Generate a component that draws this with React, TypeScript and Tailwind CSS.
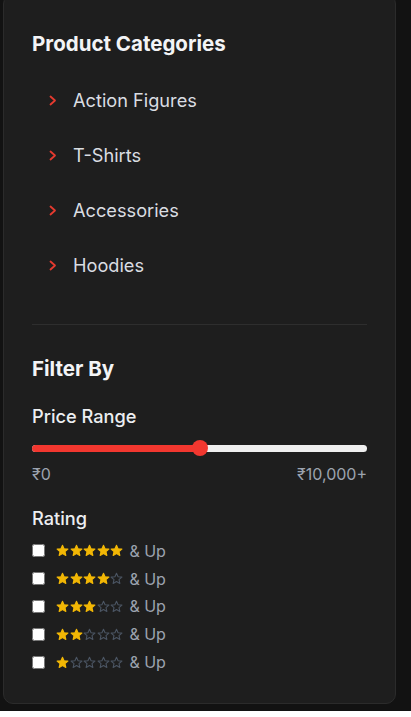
const categories = ['Action Figures', 'T-Shirts', 'Accessories', 'Hoodies'];
const ratings = [5, 4, 3, 2, 1];

function Chevron() {
  return (
    <svg width="8" height="11" viewBox="0 0 8 11" className="shrink-0">
      <polyline points="1.5,1.5 6,5.5 1.5,9.5" fill="none" stroke="#e53a2f" strokeWidth="1.8" strokeLinecap="round" strokeLinejoin="round" />
    </svg>
  );
}

function Star({ filled }: { filled: boolean }) {
  return (
    <svg width="13" height="13" viewBox="0 0 24 24" className="shrink-0">
      <path
        d="M12 2.2l2.9 6.6 7.1.6-5.4 4.7 1.6 7-6.2-3.7-6.2 3.7 1.6-7L2 9.4l7.1-.6z"
        fill={filled ? '#f2b705' : 'none'}
        stroke={filled ? '#f2b705' : '#4b5563'}
        strokeWidth="2"
        strokeLinejoin="round"
      />
    </svg>
  );
}

export default function App() {
  return (
    <div className="min-h-screen bg-[#121212] pl-[3px] pr-[15px] font-['Inter','Liberation_Sans',sans-serif]">
      <div className="-mt-[6px] rounded-[10px] border border-[#2b2b2b] bg-[#1e1e1e] px-7 pt-[35px] pb-[27px]">
        <h2 className="h-7 text-[20.5px] font-bold leading-7 text-[#f3f4f6]">Product Categories</h2>

        <ul className="mt-[15px] pl-[17px]">
          {categories.map((c) => (
            <li key={c} className="flex h-[55px] items-center gap-[16px]">
              <Chevron />
              <span className="text-[18.2px] text-[#dadde2]">{c}</span>
            </li>
          ))}
        </ul>

        <div className="mt-[31px] h-px bg-[#2e2e2e]" />

        <h3 className="mt-[30px] h-7 text-[20.5px] font-bold leading-7 text-[#f3f4f6]">Filter By</h3>

        <p className="mt-[21px] h-6 text-[18.2px] font-medium leading-6 text-[#eceef1]">Price Range</p>

        <div className="relative mt-3 flex h-4 items-center">
          <div className="flex h-[7px] w-full overflow-hidden rounded-full bg-[#efefef]">
            <div className="h-full bg-[#f2372f]" style={{ width: '50%' }} />
          </div>
          <div className="absolute left-1/2 top-0 h-4 w-4 -translate-x-1/2 rounded-full bg-[#f2372f]" />
        </div>

        <div className="mt-2 flex h-5 items-center justify-between text-[16px] text-[#9ca3af]">
          <span>₹0</span>
          <span>₹10,000+</span>
        </div>

        <p className="mt-[22px] h-6 text-[18.2px] font-medium leading-6 text-[#eceef1]">Rating</p>

        <div className="mt-[7px]">
          {ratings.map((r) => (
            <label key={r} className="flex h-[27.8px] items-center">
              <input type="checkbox" className="m-0 h-[13px] w-[13px]" />
              <span className="ml-[11px] flex gap-[0.6px]">
                {[1, 2, 3, 4, 5].map((i) => (
                  <Star key={i} filled={i <= r} />
                ))}
              </span>
              <span className="ml-[6px] text-[16px] text-[#9ca3af]">&amp; Up</span>
            </label>
          ))}
        </div>
      </div>
    </div>
  );
}
